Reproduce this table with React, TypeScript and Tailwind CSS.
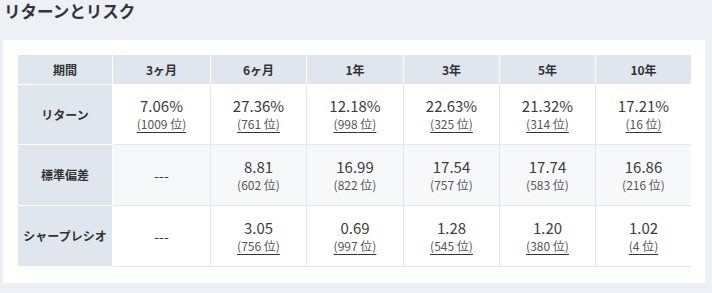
import React from 'react'

const periods = ['3ヶ月', '6ヶ月', '1年', '3年', '5年', '10年']

type Cell = { value: string; rank?: string; link?: boolean } | null

const rows: { label: string; shaded: boolean; cells: Cell[] }[] = [
  {
    label: 'リターン',
    shaded: false,
    cells: [
      { value: '7.06%', rank: '1009', link: true },
      { value: '27.36%', rank: '761', link: true },
      { value: '12.18%', rank: '998', link: true },
      { value: '22.63%', rank: '325', link: true },
      { value: '21.32%', rank: '314', link: true },
      { value: '17.21%', rank: '16', link: true },
    ],
  },
  {
    label: '標準偏差',
    shaded: true,
    cells: [
      null,
      { value: '8.81', rank: '602' },
      { value: '16.99', rank: '822' },
      { value: '17.54', rank: '757' },
      { value: '17.74', rank: '583' },
      { value: '16.86', rank: '216' },
    ],
  },
  {
    label: 'シャープレシオ',
    shaded: false,
    cells: [
      null,
      { value: '3.05', rank: '756', link: true },
      { value: '0.69', rank: '997', link: true },
      { value: '1.28', rank: '545', link: true },
      { value: '1.20', rank: '380', link: true },
      { value: '1.02', rank: '4', link: true },
    ],
  },
]

export default function App() {
  return (
    <div
      className="w-[712px] h-[293px] bg-[#edf0f4] text-[#333]"
      style={{ fontFamily: '"Noto Sans CJK JP", "Noto Sans", sans-serif' }}
    >
      <h2 className="pl-[4px] h-[40px] text-[16.5px] leading-[23px] font-bold text-[#2f3440]">
        リターンとリスク
      </h2>
      <div className="ml-[3px] w-[702px] h-[243px] bg-white pt-[15px] pl-[15px]">
        <div className="grid w-[673px] grid-cols-[95px_98px_96px_97px_96px_96px_95px]">
          <div className="h-[30px] flex items-center justify-center bg-[#e0e6ee] border-r border-b border-white text-[12px] font-bold text-[#333]">
            期間
          </div>
          {periods.map((p, i) => (
            <div
              key={p}
              className={
                'h-[30px] flex items-center justify-center bg-[#e0e6ee] border-b border-white text-[12px] font-bold text-[#333] ' +
                (i < 5 ? 'border-r' : '')
              }
            >
              {p}
            </div>
          ))}
          {rows.map((row, ri) => (
            <React.Fragment key={row.label}>
              <div
                className={
                  'flex items-center justify-center bg-[#e0e6ee] border-r border-b border-white text-[12px] font-bold text-[#333] ' +
                  (ri === 0 ? 'h-[60px]' : 'h-[61px]')
                }
              >
                {row.label}
              </div>
              {row.cells.map((c, ci) => (
                <div
                  key={ci}
                  className={
                    'flex flex-col items-center justify-center border-b border-[#e3e6ea] ' +
                    (ci < 5 ? 'border-r ' : '') +
                    (row.shaded ? 'bg-[#f7f8fa] ' : 'bg-white ') +
                    (ri === 0 ? 'h-[60px]' : 'h-[61px]')
                  }
                >
                  {c ? (
                    <>
                      <span className="text-[15px] leading-[19px] text-[#3c3c3c]">{c.value}</span>
                      <span
                        className={
                          'text-[12px] leading-[18px] text-[#555] ' +
                          (c.link ? 'underline decoration-[#2f3440] underline-offset-[3px]' : '')
                        }
                      >
                        ({c.rank} 位)
                      </span>
                    </>
                  ) : (
                    <span className="text-[14px] text-[#3c3c3c]">---</span>
                  )}
                </div>
              ))}
            </React.Fragment>
          ))}
        </div>
      </div>
    </div>
  )
}
